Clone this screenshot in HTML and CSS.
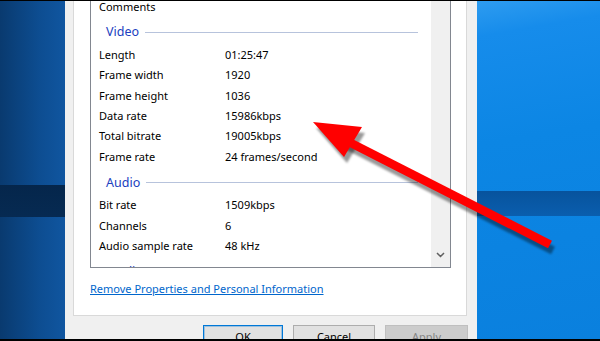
FILE: index.html
```html
<!DOCTYPE html>
<html lang="en">
<head>
    <meta charset="UTF-8">
    <meta name="viewport" content="width=device-width, initial-scale=1.0">
    <title>File Properties - Details</title>
    <link rel="stylesheet" href="styles.css">
</head>
<body>
    <div class="screen">
        <div class="desk desk-left"></div>

        <div class="dialog">
            <div class="tab-page">
                <div class="listbox">
                    <div class="list-rows">
                        <div class="row"><span class="name">Comments</span><span class="value"></span></div>

                        <div class="group"><span class="group-title">Video</span><span class="group-line"></span></div>
                        <div class="row"><span class="name">Length</span><span class="value">01:25:47</span></div>
                        <div class="row"><span class="name">Frame width</span><span class="value">1920</span></div>
                        <div class="row"><span class="name">Frame height</span><span class="value">1036</span></div>
                        <div class="row"><span class="name">Data rate</span><span class="value">15986kbps</span></div>
                        <div class="row"><span class="name">Total bitrate</span><span class="value">19005kbps</span></div>
                        <div class="row"><span class="name">Frame rate</span><span class="value">24 frames/second</span></div>

                        <div class="group"><span class="group-title">Audio</span><span class="group-line"></span></div>
                        <div class="row"><span class="name">Bit rate</span><span class="value">1509kbps</span></div>
                        <div class="row"><span class="name">Channels</span><span class="value">6</span></div>
                        <div class="row"><span class="name">Audio sample rate</span><span class="value">48 kHz</span></div>

                        <div class="group"><span class="group-title">Media</span><span class="group-line"></span></div>
                    </div>
                    <div class="scrollbar">
                        <svg width="9" height="6" viewBox="0 0 9 6"><path d="M1 1 L4.5 4.5 L8 1" fill="none" stroke="#606060" stroke-width="1.5"/></svg>
                    </div>
                </div>
                <a class="remove-link" href="#">Remove Properties and Personal Information</a>
            </div>

            <div class="buttons">
                <button class="btn btn-ok">OK</button>
                <button class="btn btn-cancel">Cancel</button>
                <button class="btn btn-apply" disabled>Apply</button>
            </div>
        </div>

        <div class="desk desk-right"></div>

        <!-- red annotation arrow pointing at the data rate -->
        <svg class="arrow" width="600" height="341" viewBox="0 0 600 341">
            <defs>
                <filter id="soft"><feGaussianBlur stdDeviation="1"/></filter>
            </defs>
            <g transform="translate(3 6)" fill="rgba(0,0,0,0.4)" stroke="rgba(0,0,0,0.4)" filter="url(#soft)">
                <line x1="345" y1="140" x2="550" y2="244.5" stroke-width="8.5"/>
                <polygon points="313,122 362,127 344,157" stroke="none"/>
            </g>
            <line x1="345" y1="140" x2="550" y2="244.5" stroke="#ff0000" stroke-width="8.5"/>
            <polygon points="313,122 362,127 344,157" fill="#ff0000"/>
        </svg>
    </div>
</body>
</html>
```

FILE: styles.css
```css
* {
    box-sizing: border-box;
}

body {
    margin: 0;
    background: #000;
    font-family: "Noto Sans", "DejaVu Sans", sans-serif;
    font-size: 11px;
    color: #000;
}

.screen {
    position: relative;
    display: flex;
    width: 600px;
    height: 341px;
    border-top: 1px solid #000;
    border-bottom: 2px solid #000;
    overflow: hidden;
}

/* desktop wallpaper on both sides of the dialog */
.desk-left {
    width: 65px;
    background:
        linear-gradient(180deg, transparent 184px, #05264b 184px, #062a52 216px, transparent 216px),
        linear-gradient(90deg, #093a6f 0%, #0d4d91 60%, #1056a0 100%);
}

.desk-right {
    flex: 1;
    background:
        linear-gradient(180deg, transparent 190px, #07539d 190px, #0a5eae 215px, transparent 215px),
        linear-gradient(170deg, #2e9cf0 0%, #168ceb 10%, #0c86e4 40%, #0a80de 100%);
}

.dialog {
    width: 412px;
    background: #f0f0f0;
    padding: 0 10px 0 8px;
    display: flex;
    flex-direction: column;
}

.tab-page {
    flex-shrink: 0;
    height: 315px;
    background: #fff;
    border: 1px solid #d9d9d9;
    border-top: none;
    padding: 0 15px 0 16px;
}

.listbox {
    height: 267px;
    display: flex;
    border: 1px solid #828790;
    border-top: none;
    overflow: hidden;
}

.list-rows {
    flex: 1;
    padding-left: 8px;
    margin-top: -5.2px;
}

.row {
    display: flex;
    align-items: center;
    height: 20.4px;
    white-space: nowrap;
}

.name {
    width: 126px;
}

.group {
    display: flex;
    align-items: center;
    height: 28px;
    padding: 6px 13px 2px 7px;
}

.group-title {
    color: #2040c0;
    font-size: 12.5px;
    line-height: 20px;
    margin-right: 6px;
}

.group-line {
    flex: 1;
    height: 1px;
    background: #b7c3dc;
}

.scrollbar {
    width: 19px;
    background: #f0f0f0;
    display: flex;
    align-items: flex-end;
    justify-content: center;
    padding-bottom: 9px;
}

.remove-link {
    display: block;
    margin-top: 13px;
    line-height: 16px;
    color: #0066cc;
    text-decoration: underline;
    white-space: nowrap;
}

.buttons {
    flex-shrink: 0;
    display: flex;
    justify-content: flex-end;
    gap: 10px;
    margin-top: 9px;
    margin-right: -1px;
}

.btn {
    height: 23px;
    padding: 0;
    font-family: inherit;
    font-size: 11px;
    line-height: 21px;
    background: #e1e1e1;
    border: 1px solid #adadad;
    color: #000;
}

.btn-ok {
    width: 80px;
    border-color: #0078d7;
    box-shadow: inset 0 0 0 1px rgba(0, 120, 215, 0.3);
}

.btn-cancel {
    width: 82px;
}

.btn-apply {
    width: 83px;
    background: #cccccc;
    border-color: #bfbfbf;
    color: #838383;
}

.arrow {
    position: absolute;
    top: -1px;
    left: 0;
    pointer-events: none;
}
```
